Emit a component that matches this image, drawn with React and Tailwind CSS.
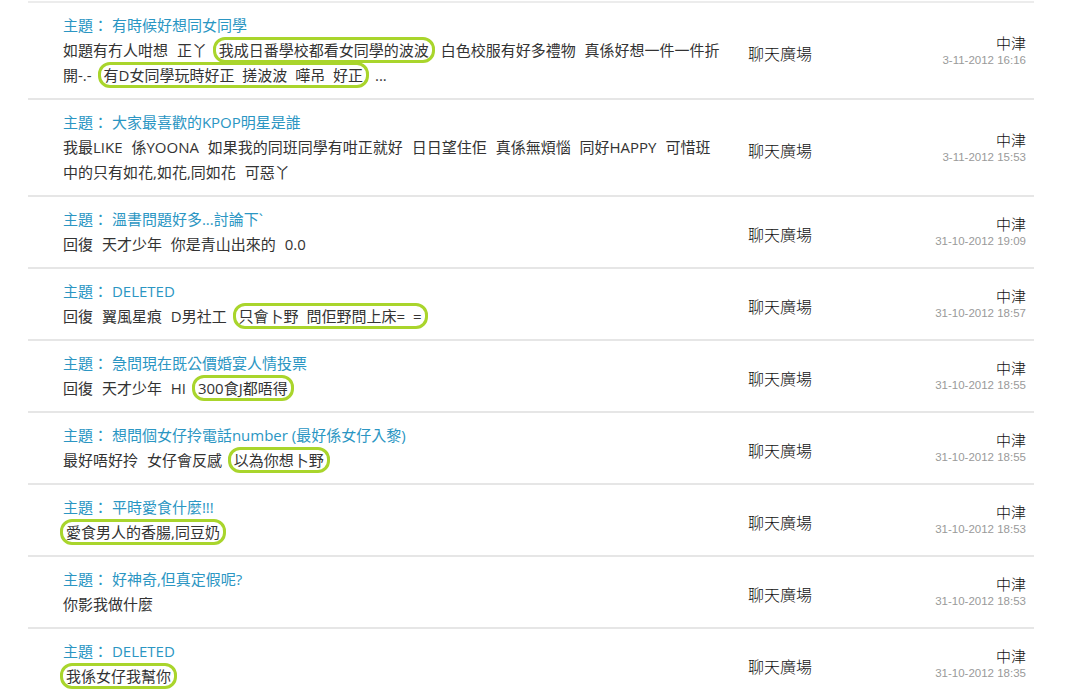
const posts = [
  {
    title: '有時候好想同女同學',
    body: [
      '如題有冇人咁想 正丫 ',
      { hl: '我成日番學校都看女同學的波波' },
      ' 白色校服有好多禮物 真係好想一件一件折開-.- ',
      { hl: '有D女同學玩時好正 搓波波 嘩吊 好正' },
      ' ...',
    ],
    date: '3-11-2012 16:16',
  },
  {
    title: '大家最喜歡的KPOP明星是誰',
    body: ['我最LIKE 係YOONA 如果我的同班同學有咁正就好 日日望住佢 真係無煩惱 同好HAPPY 可惜班中的只有如花,如花,同如花 可惡丫'],
    date: '3-11-2012 15:53',
  },
  { title: '溫書問題好多...討論下`', body: ['回復 天才少年 你是青山出來的 0.0'], date: '31-10-2012 19:09' },
  { title: 'DELETED', body: ['回復 翼風星痕 D男社工 ', { hl: '只會卜野 問佢野問上床= =' }], date: '31-10-2012 18:57' },
  { title: '急問現在既公價婚宴人情投票', body: ['回復 天才少年 HI ', { hl: '300食J都唔得' }], date: '31-10-2012 18:55' },
  { title: '想問個女仔拎電話number (最好係女仔入黎)', body: ['最好唔好拎 女仔會反感 ', { hl: '以為你想卜野' }], date: '31-10-2012 18:55' },
  { title: '平時愛食什麼!!!', body: [{ hl: '愛食男人的香腸,同豆奶' }], date: '31-10-2012 18:53' },
  { title: '好神奇,但真定假呢?', body: ['你影我做什麼'], date: '31-10-2012 18:53' },
  { title: 'DELETED', body: [{ hl: '我係女仔我幫你' }], date: '31-10-2012 18:35' },
];

function Body({ parts }) {
  return (
    <p className="text-[15px] leading-[25px] text-[#333] [word-spacing:5px]">
      {parts.map((p, i) =>
        typeof p === 'string' ? (
          <span key={i}>{p}</span>
        ) : (
          <span
            key={i}
            className="rounded-[9px] px-[3px] outline-[3px] outline-solid outline-[#a9d52c] outline-offset-0 [word-spacing:4px]"
          >
            {p.hl}
          </span>
        )
      )}
    </p>
  );
}

export default function App() {
  return (
    <div className="min-h-[694px] bg-white pt-px" style={{ fontFamily: '"Open Sans", "Noto Sans CJK TC", sans-serif' }}>
      <div className="ml-[28px] w-[1006px] border-t-2 border-[#ececec]">
        {posts.map((post, i) => (
          <div key={i} className="flex items-center border-b-2 border-[#e6e6e6]">
            <div className="w-[720px] shrink-0 py-[10px] pl-[35px] pr-[26px]">
              <p className="text-[15px] leading-[25px] text-[#2b96c3]">
                主題：&nbsp;{post.title}
              </p>
              <Body parts={post.body} />
            </div>
            <div className="w-[160px] shrink-0 pt-[6px] text-[16px] font-light text-[#111]">聊天廣場</div>
            <div className="flex flex-1 flex-col items-end pr-[8px]">
              <span className="text-[15px] font-light leading-[18px] text-[#111]">中津</span>
              <span className="text-[11.5px] leading-[16px] text-[#9a9a9a]" style={{ fontFamily: '"Liberation Sans", Arial, sans-serif' }}>
                {post.date}
              </span>
            </div>
          </div>
        ))}
      </div>
    </div>
  );
}
